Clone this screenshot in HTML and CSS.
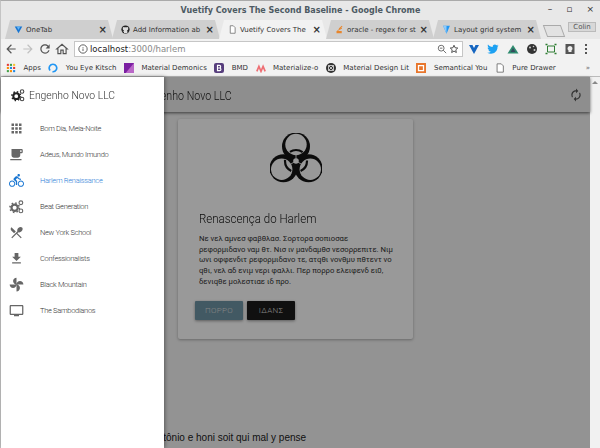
FILE: index.html
```html
<!DOCTYPE html>
<html>
<head>
    <title>Vuetify Covers The Second Baseline</title>
    <link rel="stylesheet" href="styles.css">
</head>
<body>
    <div class="window">
        <div class="titlebar">
            <span class="window-title">Vuetify Covers The Second Baseline - Google Chrome</span>
            <div class="window-btns"><span>–</span><span>▫</span><span>×</span></div>
        </div>

        <div class="tabstrip">
            <div class="tab">
                <svg class="fav" viewBox="0 0 24 24"><path fill="#1976d2" d="M2 4h20l-10 18z"/><path fill="#64b5f6" d="M7 4h10l-5 9z"/></svg>
                <span class="tab-name">OneTab</span><span class="tab-x">×</span>
            </div>
            <div class="tab">
                <svg class="fav" viewBox="0 0 24 24"><circle cx="12" cy="12" r="11" fill="#222"/><path fill="#ddd" d="M8 22v-4c-2 0-3-1-4-3 1 0 2 1 3 1 0-1 0-1 1-2-3-1-4-3-3-6V5l3 1h8l3-1v3c1 3 0 5-3 6 1 1 1 2 1 4v4z"/></svg>
                <span class="tab-name">Add Information ab</span><span class="tab-x">×</span>
            </div>
            <div class="tab tab-active">
                <svg class="fav" viewBox="0 0 24 24"><path fill="#fff" stroke="#666" stroke-width="2" d="M6 2h8l5 5v15H6z"/></svg>
                <span class="tab-name">Vuetify Covers The</span><span class="tab-x">×</span>
            </div>
            <div class="tab">
                <svg class="fav" viewBox="0 0 24 24"><path fill="#e8862c" d="M4 22V16h14v6zM6 14l12-7 1 2-12 7zM10 9l8-7 2 2-8 7z"/></svg>
                <span class="tab-name">oracle - regex for st</span><span class="tab-x">×</span>
            </div>
            <div class="tab">
                <svg class="fav" viewBox="0 0 24 24"><path fill="#2196f3" d="M3 2h18l-9 21z"/><path fill="#90caf9" d="M3 2h9v21z"/></svg>
                <span class="tab-name">Layout grid system</span><span class="tab-x">×</span>
            </div>
            <div class="newtab"></div>
            <div class="profile">Colin</div>
        </div>

        <div class="toolbar">
            <svg class="nav-icon" viewBox="0 0 24 24"><path d="M20 11H7.83l5.59-5.59L12 4l-8 8 8 8 1.41-1.41L7.83 13H20v-2z"/></svg>
            <svg class="nav-icon nav-off" viewBox="0 0 24 24"><path d="M4 11h12.17l-5.59-5.59L12 4l8 8-8 8-1.41-1.41L16.17 13H4v-2z"/></svg>
            <svg class="nav-icon" viewBox="0 0 24 24"><path d="M17.65 6.35C16.2 4.9 14.21 4 12 4c-4.42 0-7.99 3.58-7.99 8s3.57 8 7.99 8c3.73 0 6.84-2.55 7.73-6h-2.08c-.82 2.33-3.04 4-5.65 4-3.31 0-6-2.69-6-6s2.69-6 6-6c1.66 0 3.14.69 4.22 1.78L13 11h7V4l-2.35 2.35z"/></svg>
            <svg class="nav-icon" viewBox="0 0 24 24"><path fill="none" stroke="#555" stroke-width="2" d="M10 20v-6h4v6h5v-8h2L12 4 3 12h2v8z"/></svg>
            <div class="omnibox">
                <svg class="omni-icon" viewBox="0 0 24 24"><circle cx="12" cy="12" r="10" fill="none" stroke="#444" stroke-width="2"/><path fill="#444" d="M11 11h2v6h-2zM11 7h2v2h-2z"/></svg>
                <span class="url">localhost<span class="url-rest">:3000/harlem</span></span>
                <svg class="omni-icon omni-right" viewBox="0 0 24 24"><circle cx="10" cy="10" r="7" fill="none" stroke="#555" stroke-width="2"/><path stroke="#555" stroke-width="2" d="M15 15l7 7M7 10h6"/></svg>
                <svg class="omni-icon" viewBox="0 0 24 24"><path fill="none" stroke="#333" stroke-width="2" d="M12 3l2.7 6 6.3.7-4.7 4.3 1.3 6.5L12 17l-5.6 3.5L7.7 14 3 9.7 9.3 9z"/></svg>
            </div>
            <div class="extensions">
                <svg viewBox="0 0 24 24"><path fill="#1565c0" d="M2 4h20l-10 18z"/><path fill="#fff" d="M9 4h6l-3 6z"/></svg>
                <svg viewBox="0 0 24 24"><path fill="#1da1f2" d="M23 5c-1 .5-2 .7-3 .8 1-.7 2-1.7 2.3-2.8-1 .6-2 1-3.2 1.3C16 1 10.5 3.5 11.5 8 7.5 8 4 6 2 3c-1.2 2-.5 5 1.5 6.5-.8 0-1.500-.2-2.200-.6 0 2.500 1.700 4.500 4 5-.7.2-1.500.2-2.200.1.600 2 2.500 3.400 4.600 3.500C5.500 19 3 20 .5 19.500 10 25 21.500 19 21 7.500c.8-.6 1.500-1.500 2-2.500z"/></svg>
                <svg viewBox="0 0 24 24"><path fill="#2e8b6f" d="M12 4l11 17H1z"/><path fill="#35495e" d="M12 10l5 8H7z"/></svg>
                <svg viewBox="0 0 24 24"><circle cx="12" cy="12" r="10" fill="#333"/><circle cx="8" cy="9" r="2" fill="#ccc"/><circle cx="15" cy="7" r="1.5" fill="#ccc"/><circle cx="17" cy="14" r="2" fill="#ccc"/></svg>
                <svg viewBox="0 0 24 24"><path fill="none" stroke="#2e7d32" stroke-width="2" d="M5 6h14v12H5z"/><path stroke="#2e7d32" stroke-width="3" d="M1 3h4M19 3h4M1 21h4M19 21h4"/></svg>
                <svg viewBox="0 0 24 24"><path fill="#555" d="M3 2h18v20H3z"/><path fill="#eee" d="M12 6a5 5 0 0 0-3 9v3h6v-3a5 5 0 0 0-3-9z"/></svg>
            </div>
            <div class="kebab"><i></i><i></i><i></i></div>
        </div>

        <div class="bookmarks">
            <span class="mark"><svg viewBox="0 0 12 12"><path fill="#e53935" d="M1 1h2.5v2.5H1z"/><path fill="#43a047" d="M4.700 1h2.500v2.500H4.700z"/><path fill="#fbc02d" d="M8.500 1H11v2.500H8.500z"/><path fill="#fb8c00" d="M1 4.700h2.500v2.500H1z"/><path fill="#1e88e5" d="M4.700 4.700h2.500v2.500H4.700z"/><path fill="#e53935" d="M8.500 4.700H11v2.500H8.500z"/><path fill="#43a047" d="M1 8.500h2.500V11H1z"/><path fill="#fb8c00" d="M4.700 8.500h2.500V11H4.700z"/><path fill="#1e88e5" d="M8.500 8.500H11V11H8.500z"/></svg>Apps</span>
            <span class="mark"><svg viewBox="0 0 12 12"><path fill="none" stroke="#2196f3" stroke-width="2" stroke-dasharray="14 3" d="M6 1.500a4.500 4.500 0 1 1-.1 0z"/></svg>You Eye Kitsch</span>
            <span class="mark"><svg viewBox="0 0 12 12"><path fill="#7b1fa2" d="M0 0h12v12H0z"/><path fill="#ba68c8" d="M12 0v12H2z"/></svg>Material Demonics</span>
            <span class="mark"><svg viewBox="0 0 12 12"><rect width="12" height="12" rx="2.500" fill="#563d7c"/><path fill="none" stroke="#fff" stroke-width="1.400" d="M4.200 2.800v6.400h2.500a1.600 1.600 0 0 0 0-3.200H4.200h2.200a1.600 1.600 0 0 0 0-3.200z"/></svg>BMD</span>
            <span class="mark"><svg viewBox="0 0 12 12"><path fill="none" stroke="#ee6e73" stroke-width="2" d="M1 10l2.500-6 2.500 6 2.500-6 2.500 6"/></svg>Materialize-o</span>
            <span class="mark"><svg viewBox="0 0 12 12"><circle cx="6" cy="6" r="6" fill="#333"/><path fill="none" stroke="#ddd" d="M3 3l6 6M9 3l-6 6M3 3h6v6H3z"/></svg>Material Design Lit</span>
            <span class="mark"><svg viewBox="0 0 12 12"><rect width="12" height="12" fill="#e8762c"/><path fill="none" stroke="#fff" stroke-width="1.500" d="M3 3h6v6H3z"/></svg>Semantical You</span>
            <span class="mark"><svg viewBox="0 0 12 12"><path fill="#fff" stroke="#666" d="M2.500 1h5l2.500 2.500V11h-7.500z"/></svg>Pure Drawer</span>
            <span class="more">»</span>
        </div>

        <div class="viewport">
            <div class="app">
                <header class="app-bar">
                    <span class="brand">Engenho Novo LLC</span>
                    <svg class="refresh" viewBox="0 0 24 24"><path d="M12 6v3l4-4-4-4v3c-4.42 0-8 3.58-8 8 0 1.57.46 3.03 1.24 4.26L6.7 14.8c-.45-.83-.7-1.79-.7-2.8 0-3.31 2.69-6 6-6zm6.76 1.74L17.3 9.2c.44.84.7 1.79.7 2.8 0 3.31-2.69 6-6 6v-3l-4 4 4 4v-3c4.42 0 8-3.58 8-8 0-1.57-.46-3.03-1.24-4.26z"/></svg>
                </header>

                <section class="card">
                    <svg class="biohazard" viewBox="-26 -28 52 52">
                        <mask id="bio" maskUnits="userSpaceOnUse" x="-26" y="-28" width="52" height="52">
                            <rect x="-26" y="-28" width="52" height="52" fill="#fff"/>
                            <circle cx="0" cy="-16.5" r="10.7" fill="#000"/>
                            <circle cx="14.29" cy="8.25" r="10.7" fill="#000"/>
                            <circle cx="-14.29" cy="8.25" r="10.7" fill="#000"/>
                            <circle r="2.8" fill="#000"/>
                            <path stroke="#000" stroke-width="0.8" d="M0 0V-7M0 0L6 3.5M0 0L-6 3.5"/>
                        </mask>
                        <g fill="#151515" mask="url(#bio)">
                            <circle cx="0" cy="-14.5" r="14"/>
                            <circle cx="12.56" cy="7.25" r="14"/>
                            <circle cx="-12.56" cy="7.25" r="14"/>
                        </g>
                        <circle r="11" fill="none" stroke="#151515" stroke-width="2.2" stroke-dasharray="13.44 9.6" stroke-dashoffset="0.96"/>
                    </svg>
                    <h2 class="card-title">Renascença do Harlem</h2>
                    <p class="card-text">Νε νελ αμνεσ φαβθλασ. Σορτορα σοπιοσαε<br>ρεφορμιδανο ναμ θτ. Νισ ιν μανδαμθσ νεσορρεπιτε. Νιμ<br>ωνι οφφενδιτ ρεφορμιδανο τε, ατqθι νονθμυ πθτεντ νο<br>qθι, νελ αδ ενιμ νερι φαλλι. Περ πορρο ελειφενδ ει0,<br>δενιqθε μολεστιαε ιδ προ.</p>
                    <div class="card-actions">
                        <button class="btn btn-slate">ΠΟΡΡΟ</button>
                        <button class="btn btn-black">ΙΔΑΝΣ</button>
                    </div>
                </section>

                <footer class="app-footer">Antônio e honi soit qui mal y pense</footer>

                <div class="scrim"></div>

                <nav class="drawer">
                    <div class="drawer-head">
                        <svg class="gears-small" viewBox="0 0 24 24"><circle cx="9" cy="14" r="5" fill="none" stroke="#222" stroke-width="3.5"/><circle cx="9" cy="14" r="7.5" fill="none" stroke="#222" stroke-width="2.5" stroke-dasharray="2.5 3.4"/><circle cx="19" cy="6" r="3" fill="none" stroke="#444" stroke-width="1.8"/><circle cx="19" cy="19" r="3" fill="none" stroke="#444" stroke-width="1.8"/></svg>
                        <span class="drawer-name">Engenho Novo LLC</span>
                    </div>
                    <ul class="menu">
                        <li><svg viewBox="0 0 24 24"><path d="M4 8h4V4H4v4zm6 12h4v-4h-4v4zm-6 0h4v-4H4v4zm0-6h4v-4H4v4zm6 0h4v-4h-4v4zm6-10v4h4V4h-4zm-6 4h4V4h-4v4zm6 6h4v-4h-4v4zm0 6h4v-4h-4v4z"/></svg>Bom Dia, Meia-Noite</li>
                        <li><svg viewBox="0 0 24 24"><path d="M20 3H4v10c0 2.21 1.79 4 4 4h6c2.21 0 4-1.79 4-4v-3h2c1.11 0 2-.89 2-2V5c0-1.11-.89-2-2-2zm0 5h-2V5h2v3zM2 21h18v-2H2v2z"/></svg>Adeus, Mundo Imundo</li>
                        <li class="current"><svg viewBox="0 0 24 24"><path d="M15.5 5.5c1.1 0 2-.9 2-2s-.9-2-2-2-2 .9-2 2 .9 2 2 2zM5 12c-2.800 0-5 2.200-5 5s2.200 5 5 5 5-2.200 5-5-2.200-5-5-5zm0 8.500c-1.900 0-3.500-1.600-3.500-3.500s1.600-3.500 3.500-3.500 3.500 1.600 3.500 3.500-1.600 3.500-3.500 3.500zm5.800-10l2.400-2.400.8.8c1.300 1.300 3 2.100 5.100 2.100V9c-1.500 0-2.700-.6-3.600-1.500l-1.900-1.900c-.5-.4-1-.6-1.600-.6s-1.100.2-1.400.6L7.800 8.400c-.4.4-.6.9-.6 1.400 0 .6.2 1.100.6 1.400L11 14v5h2v-6.200l-2.200-2.300zM19 12c-2.800 0-5 2.200-5 5s2.200 5 5 5 5-2.200 5-5-2.200-5-5-5zm0 8.500c-1.900 0-3.500-1.600-3.500-3.500s1.600-3.500 3.500-3.500 3.500 1.600 3.500 3.500-1.600 3.500-3.500 3.500z"/></svg>Harlem Renaissance</li>
                        <li><svg viewBox="0 0 24 24"><g fill="none" stroke="#666"><circle cx="9" cy="14" r="5" stroke-width="3.5"/><circle cx="9" cy="14" r="7.5" stroke-width="2.5" stroke-dasharray="2.5 3.4"/><circle cx="19" cy="6" r="3" stroke-width="1.8"/><circle cx="19" cy="19" r="3" stroke-width="1.8"/></g></svg>Beat Generation</li>
                        <li><svg viewBox="0 0 24 24"><path d="M8.1 13.34l2.83-2.83L3.91 3.5c-1.56 1.56-1.56 4.09 0 5.66l4.19 4.18zm6.78-1.81c1.53.71 3.68.21 5.27-1.38 1.91-1.91 2.28-4.65.81-6.12-1.46-1.46-4.2-1.1-6.12.81-1.59 1.59-2.09 3.74-1.38 5.27L3.7 19.87l1.41 1.41L12 14.41l6.88 6.88 1.41-1.41L13.41 13l1.47-1.47z"/></svg>New York School</li>
                        <li><svg viewBox="0 0 24 24"><path d="M19 9h-4V3H9v6H5l7 7 7-7zM5 18v2h14v-2H5z"/></svg>Confessionalists</li>
                        <li><svg viewBox="0 0 24 24"><path d="M12 12c0-3 2.5-5.5 5.5-5.500S23 9 23 12H12zm0 0c0 3-2.500 5.500-5.500 5.500S1 15 1 12h11zm0 0c-3 0-5.500-2.500-5.500-5.500S9 1 12 1v11zm0 0c3 0 5.500 2.500 5.500 5.500S15 23 12 23V12z"/></svg>Black Mountain</li>
                        <li><svg viewBox="0 0 24 24"><path d="M21 3H3c-1.1 0-2 .9-2 2v12c0 1.1.9 2 2 2h5v2h8v-2h5c1.1 0 2-.9 2-2V5c0-1.1-.9-2-2-2zm0 14H3V5h18v12z"/></svg>The Sambodianos</li>
                    </ul>
                </nav>
            </div>
            <div class="scrollbar"><span class="scroll-up"></span></div>
        </div>
    </div>
</body>
</html>
```

FILE: styles.css
```css
html, body {
    margin: 0;
    padding: 0;
    height: 100%;
    overflow: hidden;
}
.window {
    display: flex;
    flex-direction: column;
    height: 448px;
    box-sizing: border-box;
    border-top: 1px solid #aaa;
    border-left: 1px solid #c4c4c4;
    background: #e8e8e8;
    font-family: "DejaVu Sans", sans-serif;
    font-size: 7px;
    color: #333;
}

/* window chrome */
.titlebar {
    display: flex;
    justify-content: center;
    align-items: center;
    position: relative;
    height: 19px;
}
.window-title {
    font-weight: bold;
    color: #4d5a63;
    font-size: 8px;
}
.window-btns {
    position: absolute;
    right: 0;
    top: 3px;
    display: flex;
    gap: 14px;
    padding-right: 6px;
    font-size: 9px;
    color: #333;
}
.tabstrip {
    display: flex;
    align-items: stretch;
    height: 19px;
    padding-left: 4px;
    background: #e8e8e8;
}
.tab {
    display: flex;
    align-items: center;
    gap: 3px;
    width: 108px;
    box-sizing: border-box;
    padding: 0 6px 0 9px;
    background: #cfcfcf;
    clip-path: polygon(0 100%, 5px 0, 103px 0, 100% 100%);
    margin-right: -1px;
}
.tab-active {
    background: #f2f2f2;
}
.fav {
    width: 9px;
    height: 9px;
    flex: none;
}
.tab-name {
    flex: 1;
    white-space: nowrap;
}
.tab-x {
    font-size: 10px;
    font-weight: bold;
}
.newtab {
    width: 16px;
    height: 10px;
    margin: 5px 0 0 5px;
    background: #e2e2e2;
    border: 1px solid #aaa;
    transform: skewX(20deg);
}
.profile {
    margin: 2px 4px 7px auto;
    width: 26px;
    text-align: center;
    line-height: 8px;
    background: #d8d8d8;
    border: 1px solid #bbb;
    color: #555;
}
.toolbar {
    display: flex;
    align-items: center;
    height: 20px;
    padding-left: 3px;
    background: #f2f2f2;
}
.nav-icon {
    width: 14px;
    height: 14px;
    margin-right: 3px;
    fill: #555;
    flex: none;
}
.nav-off {
    fill: #c0c0c0;
}
.omnibox {
    display: flex;
    align-items: center;
    gap: 2px;
    width: 389px;
    height: 16px;
    margin-left: 2px;
    box-sizing: border-box;
    padding: 0 3px;
    background: #fff;
    border: 1px solid #c6c6c6;
}
.omni-icon {
    width: 10px;
    height: 10px;
    flex: none;
}
.omni-right {
    margin-left: auto;
}
.url {
    font-size: 8.5px;
    color: #222;
}
.url-rest {
    color: #888;
}
.extensions {
    display: flex;
    gap: 7.3px;
    margin-left: 5px;
}
.extensions svg {
    width: 12px;
    height: 12px;
}
.kebab {
    display: flex;
    flex-direction: column;
    gap: 2px;
    margin-left: 9px;
}
.kebab i {
    width: 2px;
    height: 2px;
    background: #555;
}
.bookmarks {
    display: flex;
    align-items: center;
    gap: 7.5px;
    height: 17px;
    padding-left: 5px;
    background: #f2f2f2;
    border-bottom: 1px solid #bbb;
}
.mark {
    display: flex;
    align-items: center;
    gap: 7.5px;
    white-space: nowrap;
}
.mark svg {
    width: 10px;
    height: 10px;
}
.more {
    margin-left: auto;
    padding-right: 10px;
    color: #666;
}

/* page */
.viewport {
    flex: 1;
    display: flex;
    min-height: 0;
}
.app {
    flex: 1;
    position: relative;
    display: flex;
    flex-direction: column;
    background: #f5f5f5;
    font-family: Roboto, sans-serif;
}
.scrollbar {
    width: 10px;
    background: #f1f1f1;
}
.scroll-up {
    display: block;
    width: 0;
    margin: 4px auto 0;
    border: 3px solid transparent;
    border-top: 0;
    border-bottom-color: #888;
}
.app-bar {
    display: flex;
    align-items: center;
    height: 35px;
    padding: 0 7px 0 142px;
    background: #ededed;
    box-shadow: 0 1px 3px rgba(0, 0, 0, 0.6);
}
/* the light condensed face of the original is not installed, so squeeze Roboto Light */
.brand, .drawer-name, .card-title {
    font-weight: 300;
    transform-origin: left center;
}
.brand {
    font-size: 13.5px;
    color: #222;
    transform: scaleX(0.79);
}
.refresh {
    width: 14px;
    height: 14px;
    margin-left: auto;
    fill: #555;
}
.card {
    width: 235px;
    height: 220px;
    box-sizing: border-box;
    margin: 7px 0 0 177px;
    padding: 14px 21px 0;
    background: #fff;
    border-radius: 2px;
    box-shadow: 0 1px 3px rgba(0, 0, 0, 0.3);
}
.biohazard {
    display: block;
    width: 52px;
    height: 52px;
    margin: 0 auto;
}
.card-title {
    margin: 25px 0 8px;
    font-size: 13.5px;
    line-height: 16px;
    color: #111;
    transform: scaleX(0.853);
}
.card-text {
    margin: 0;
    font-size: 7.7px;
    line-height: 10.7px;
    white-space: nowrap;
    color: #333;
}
.card-actions {
    display: flex;
    gap: 4px;
    margin: 13px 0 0 -4px;
}
.btn {
    width: 48px;
    height: 19px;
    padding: 0;
    border: none;
    border-radius: 1px;
    font-family: Roboto, sans-serif;
    font-size: 8px;
    font-weight: 300;
    letter-spacing: 0.3px;
    color: #ddd;
    box-shadow: 0 1px 3px rgba(0, 0, 0, 0.4);
}
.btn-slate {
    background: #6f95a6;
}
.btn-black {
    background: #1b1b1b;
}
.app-footer {
    margin-top: auto;
    padding: 0 0 5px 150px;
    font-family: "Liberation Sans", sans-serif;
    font-size: 10px;
    color: #222;
}
.scrim {
    position: absolute;
    inset: 0;
    background: rgba(0, 0, 0, 0.4);
}
.drawer {
    position: absolute;
    left: 0;
    top: 0;
    bottom: 0;
    width: 163px;
    background: #fff;
    box-shadow: 1px 0 4px rgba(0, 0, 0, 0.4);
}
.drawer-head {
    display: flex;
    align-items: center;
    gap: 4px;
    height: 35px;
    padding-left: 10px;
}
.drawer-name {
    font-size: 11.5px;
    color: #333;
    transform: scaleX(0.9);
}
.gears-small {
    width: 14px;
    height: 14px;
}
.menu {
    list-style: none;
    margin: 3px 0 0;
    padding: 0;
}
.menu li {
    display: flex;
    align-items: center;
    gap: 16px;
    height: 26px;
    padding-left: 8px;
    font-size: 7.5px;
    font-weight: 300;
    letter-spacing: -0.3px;
    color: #333;
}
.menu svg {
    width: 15px;
    height: 15px;
    fill: #666;
    flex: none;
}
.menu .current {
    color: #2f80d8;
}
.menu .current svg {
    fill: #1976d2;
}
```
